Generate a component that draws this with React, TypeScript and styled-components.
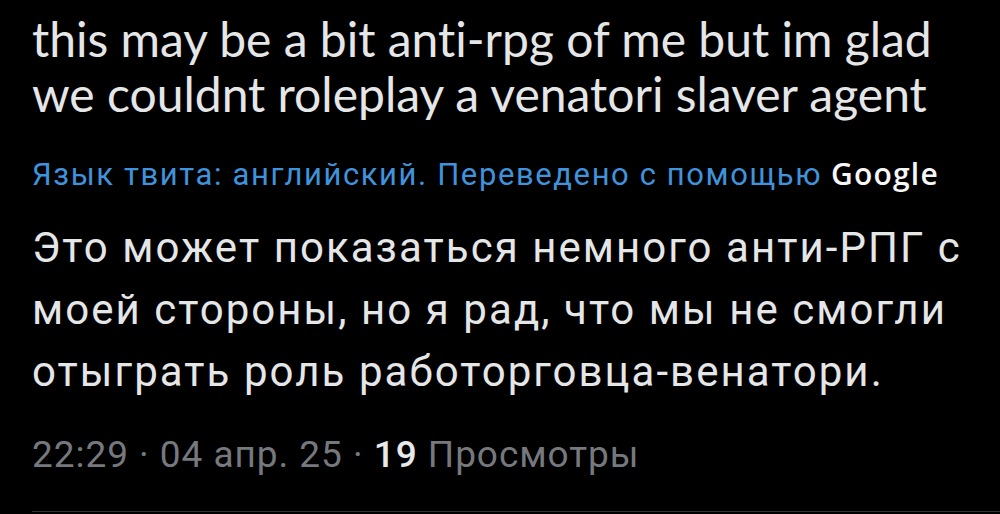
import React from "react";
import styled, { createGlobalStyle } from "styled-components";

const Global = createGlobalStyle`
  html, body {
    margin: 0;
    padding: 0;
    background: #000;
  }
  body {
    width: 1000px;
    height: 514px;
    overflow: hidden;
  }
`;

const Page = styled.main`
  width: 1000px;
  height: 514px;
  box-sizing: border-box;
  background: #000;
  padding: 11px 0 0 32px;
  display: flex;
  flex-direction: column;
  overflow: hidden;
`;

const Original = styled.p`
  margin: 0;
  font-family: Lato, "Open Sans", sans-serif;
  font-size: 48px;
  line-height: 55px;
  color: #e4e6e7;
  white-space: nowrap;
  font-variant-ligatures: none;
  font-feature-settings: "liga" 0;
`;

const TranslateNote = styled.div`
  margin-top: 34px;
  display: flex;
  align-items: baseline;
  gap: 9px;
  font-family: Roboto, "Noto Sans", sans-serif;
  font-size: 31px;
  line-height: 37px;
  letter-spacing: 1.6px;
  color: #3f93dc;
  white-space: nowrap;
`;

const GoogleMark = styled.span`
  font-family: "Open Sans", Lato, sans-serif;
  font-weight: 600;
  font-size: 30px;
  color: #f6f6f6;
  letter-spacing: 1.2px;
`;

const Translation = styled.p`
  margin: 24px 0 0;
  font-family: Roboto, "Noto Sans", sans-serif;
  font-size: 42px;
  line-height: 62px;
  letter-spacing: 2.05px;
  color: #e4e6e7;
  white-space: nowrap;
`;

const Meta = styled.div`
  margin-top: 30px;
  font-family: Roboto, "Noto Sans", sans-serif;
  font-size: 37px;
  line-height: 44px;
  color: #75797e;
  white-space: nowrap;
  letter-spacing: 0.95px;
`;

const Strong = styled.span`
  color: #e7e9ea;
  font-weight: 500;
`;

const Divider = styled.hr`
  margin: auto 0 2px;
  border: 0;
  border-top: 1px solid #2f3336;
  width: 100%;
`;

export default function App() {
  return (
    <>
      <Global />
      <Page>
        <Original>
          this may be a bit anti-rpg of me but im glad
          <br />
          we couldnt roleplay a venatori slaver agent
        </Original>
        <TranslateNote>
          <span>Язык твита: английский. Переведено с помощью</span>
          <GoogleMark>Google</GoogleMark>
        </TranslateNote>
        <Translation>
          Это может показаться немного анти-РПГ с
          <br />
          моей стороны, но я рад, что мы не смогли
          <br />
          отыграть роль работорговца-венатори.
        </Translation>
        <Meta>
          22:29 · 04 апр. 25 · <Strong>19</Strong> Просмотры
        </Meta>
        <Divider />
      </Page>
    </>
  );
}
